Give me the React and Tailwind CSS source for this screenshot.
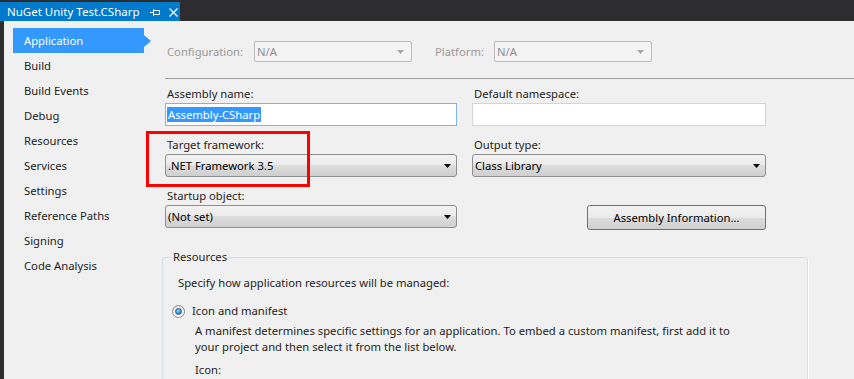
import React from "react";

const FONT = { fontFamily: '"Segoe UI", "Noto Sans", "Open Sans", sans-serif' };

function Arrow({ disabled }) {
  return (
    <svg width="7" height="4" viewBox="0 0 7 4" className="shrink-0">
      <path d="M0 0 H7 L3.5 4 Z" fill={disabled ? "#a8a8a8" : "#000"} />
    </svg>
  );
}

function Combo({ text, className = "" }) {
  return (
    <div
      className={
        "flex h-[23px] items-center justify-between rounded-[3px] border border-[#8e8f8f] bg-[linear-gradient(#f2f2f2,#ebebeb_50%,#dddddd_50%,#cfcfcf)] pl-[2px] pr-[5px] pt-px text-[11.25px] text-black " +
        className
      }
    >
      <span>{text}</span>
      <Arrow />
    </div>
  );
}

function DisabledCombo({ text }) {
  return (
    <div className="flex h-[21px] w-[158px] items-center justify-between rounded-[2px] border border-[#bcbcbc] bg-[#f4f4f4] pl-[2px] pr-[7px] pt-px text-[11.25px] text-[#8d8d8d]">
      <span>{text}</span>
      <Arrow disabled />
    </div>
  );
}

const items = [
  "Build",
  "Build Events",
  "Debug",
  "Resources",
  "Services",
  "Settings",
  "Reference Paths",
  "Signing",
  "Code Analysis",
];

export default function App() {
  return (
    <div className="relative flex h-[379px] w-[854px] flex-col overflow-hidden bg-[#f0f0f0] text-[11.25px]" style={FONT}>
      {/* Document tab bar */}
      <div className="flex h-[21px] shrink-0 items-end bg-[#2d2d30]">
        <div className="flex h-[19px] w-[180px] shrink-0 items-center whitespace-nowrap bg-[#007acc] pl-[7px] text-[11.5px] text-white">
          <span className="pt-[1px]">NuGet Unity Test.CSharp</span>
          <svg width="10" height="9" viewBox="0 0 10 9" className="ml-[10px] mt-[2px] shrink-0">
            <path d="M0 4.5 H3 M3.5 1 V8 M3.5 2.5 H9.5 V6.5 H3.5" stroke="#fff" strokeWidth="1" fill="none" />
          </svg>
          <svg width="9" height="9" viewBox="0 0 9 9" className="ml-[9px] mt-[2px] shrink-0">
            <path d="M0.5 0.5 L8.5 8.5 M8.5 0.5 L0.5 8.5" stroke="#fff" strokeWidth="1.3" />
          </svg>
        </div>
      </div>

      <div className="flex flex-1">
        <div className="w-[4px] shrink-0 bg-[#2d2d30]" />

        {/* Sidebar */}
        <div className="w-[161px] shrink-0 pt-[7px] text-[#1e1e1e]">
          <div className="relative ml-[9px] flex h-[25px] w-[131px] items-center bg-[#3399ff] pl-[11px] pt-px text-white">
            Application
            <svg width="7" height="12" viewBox="0 0 7 12" className="absolute left-full top-[7px]">
              <path d="M0 0 L7 6 L0 12 Z" fill="#3399ff" />
            </svg>
          </div>
          {items.map((t) => (
            <div key={t} className="flex h-[25px] items-center pl-[20px] pt-px">
              {t}
            </div>
          ))}
        </div>

        {/* Content */}
        <div className="flex-1 pt-[20px] text-[#1e1e1e]">
          <div className="flex items-center">
            <span className="w-[89px] pl-[2px] pt-px text-[#9b9b9b]">Configuration:</span>
            <DisabledCombo text="N/A" />
            <span className="ml-[23px] w-[59px] pt-px text-[#9b9b9b]">Platform:</span>
            <DisabledCombo text="N/A" />
          </div>

          <div className="mt-[16px] h-px bg-[#a0a0a0]" />

          <div className="flex gap-[15px]">
            {/* Left column */}
            <div className="w-[292px]">
              <div className="mt-[7px] h-[16px] pl-[2px] leading-[16px]">Assembly name:</div>
              <div className="mt-[1px] flex h-[23px] items-center border border-[#7eb4ea] bg-white pl-[1px]">
                <span className="bg-[#3399ff] px-px leading-[15px] text-white">Assembly-CSharp</span>
              </div>

              <div className="mt-[11px] h-[16px] pl-[2px] leading-[16px]">Target framework:</div>
              <Combo text=".NET Framework 3.5" className="mt-[1px] w-full" />

              <div className="mt-[11px] h-[16px] pl-[2px] leading-[16px]">Startup object:</div>
              <Combo text="(Not set)" className="mt-[1px] w-full" />
            </div>

            {/* Right column */}
            <div className="flex w-[294px] flex-col">
              <div className="mt-[7px] h-[16px] pl-[2px] leading-[16px]">Default namespace:</div>
              <div className="mt-[1px] h-[23px] border border-[#d4d4d4] bg-white" />

              <div className="mt-[11px] h-[16px] pl-[2px] leading-[16px]">Output type:</div>
              <Combo text="Class Library" className="mt-[1px] w-full" />

              <button className="mt-[28px] h-[25px] w-[179px] self-end rounded-[3px] border border-[#707070] bg-[linear-gradient(#f2f2f2,#ebebeb_50%,#dddddd_50%,#cfcfcf)] pt-px text-[11.25px] text-black">
                Assembly Information...
              </button>
            </div>
          </div>

          {/* Resources group */}
          <fieldset className="ml-[-3px] mt-[19px] w-[646px] rounded-[3px] border border-[#d5dfe5] pb-[20px] shadow-[1px_1px_0_#ffffff]">
            <legend className="ml-[9px] px-[1px] leading-[16px]">Resources</legend>
            <div className="pl-[15px] pt-[10px] leading-[16px]">Specify how application resources will be managed:</div>
            <div className="mt-[12px] flex items-center pl-[9px]">
              <div className="flex h-[13px] w-[13px] items-center justify-center rounded-full border border-[#8a8a8a] bg-[linear-gradient(#e6e6e6,#ffffff)]">
                <div className="h-[7px] w-[7px] rounded-full border border-[#1a5d8f] bg-[radial-gradient(circle_at_40%_35%,#9fd9ff,#1f86cc_70%)]" />
              </div>
              <span className="ml-[7px] leading-[16px]">Icon and manifest</span>
            </div>
            <div className="mt-[4px] pl-[32px] leading-[16px]">
              A manifest determines specific settings for an application. To embed a custom manifest, first add it to
              <br />
              your project and then select it from the list below.
            </div>
            <div className="mt-[7px] pl-[32px] leading-[16px]">Icon:</div>
          </fieldset>
        </div>
      </div>

      {/* Red annotation highlight */}
      <div className="pointer-events-none absolute left-[146px] top-[131px] h-[56px] w-[164px] border-[3px] border-[#ff0000]" />
    </div>
  );
}
